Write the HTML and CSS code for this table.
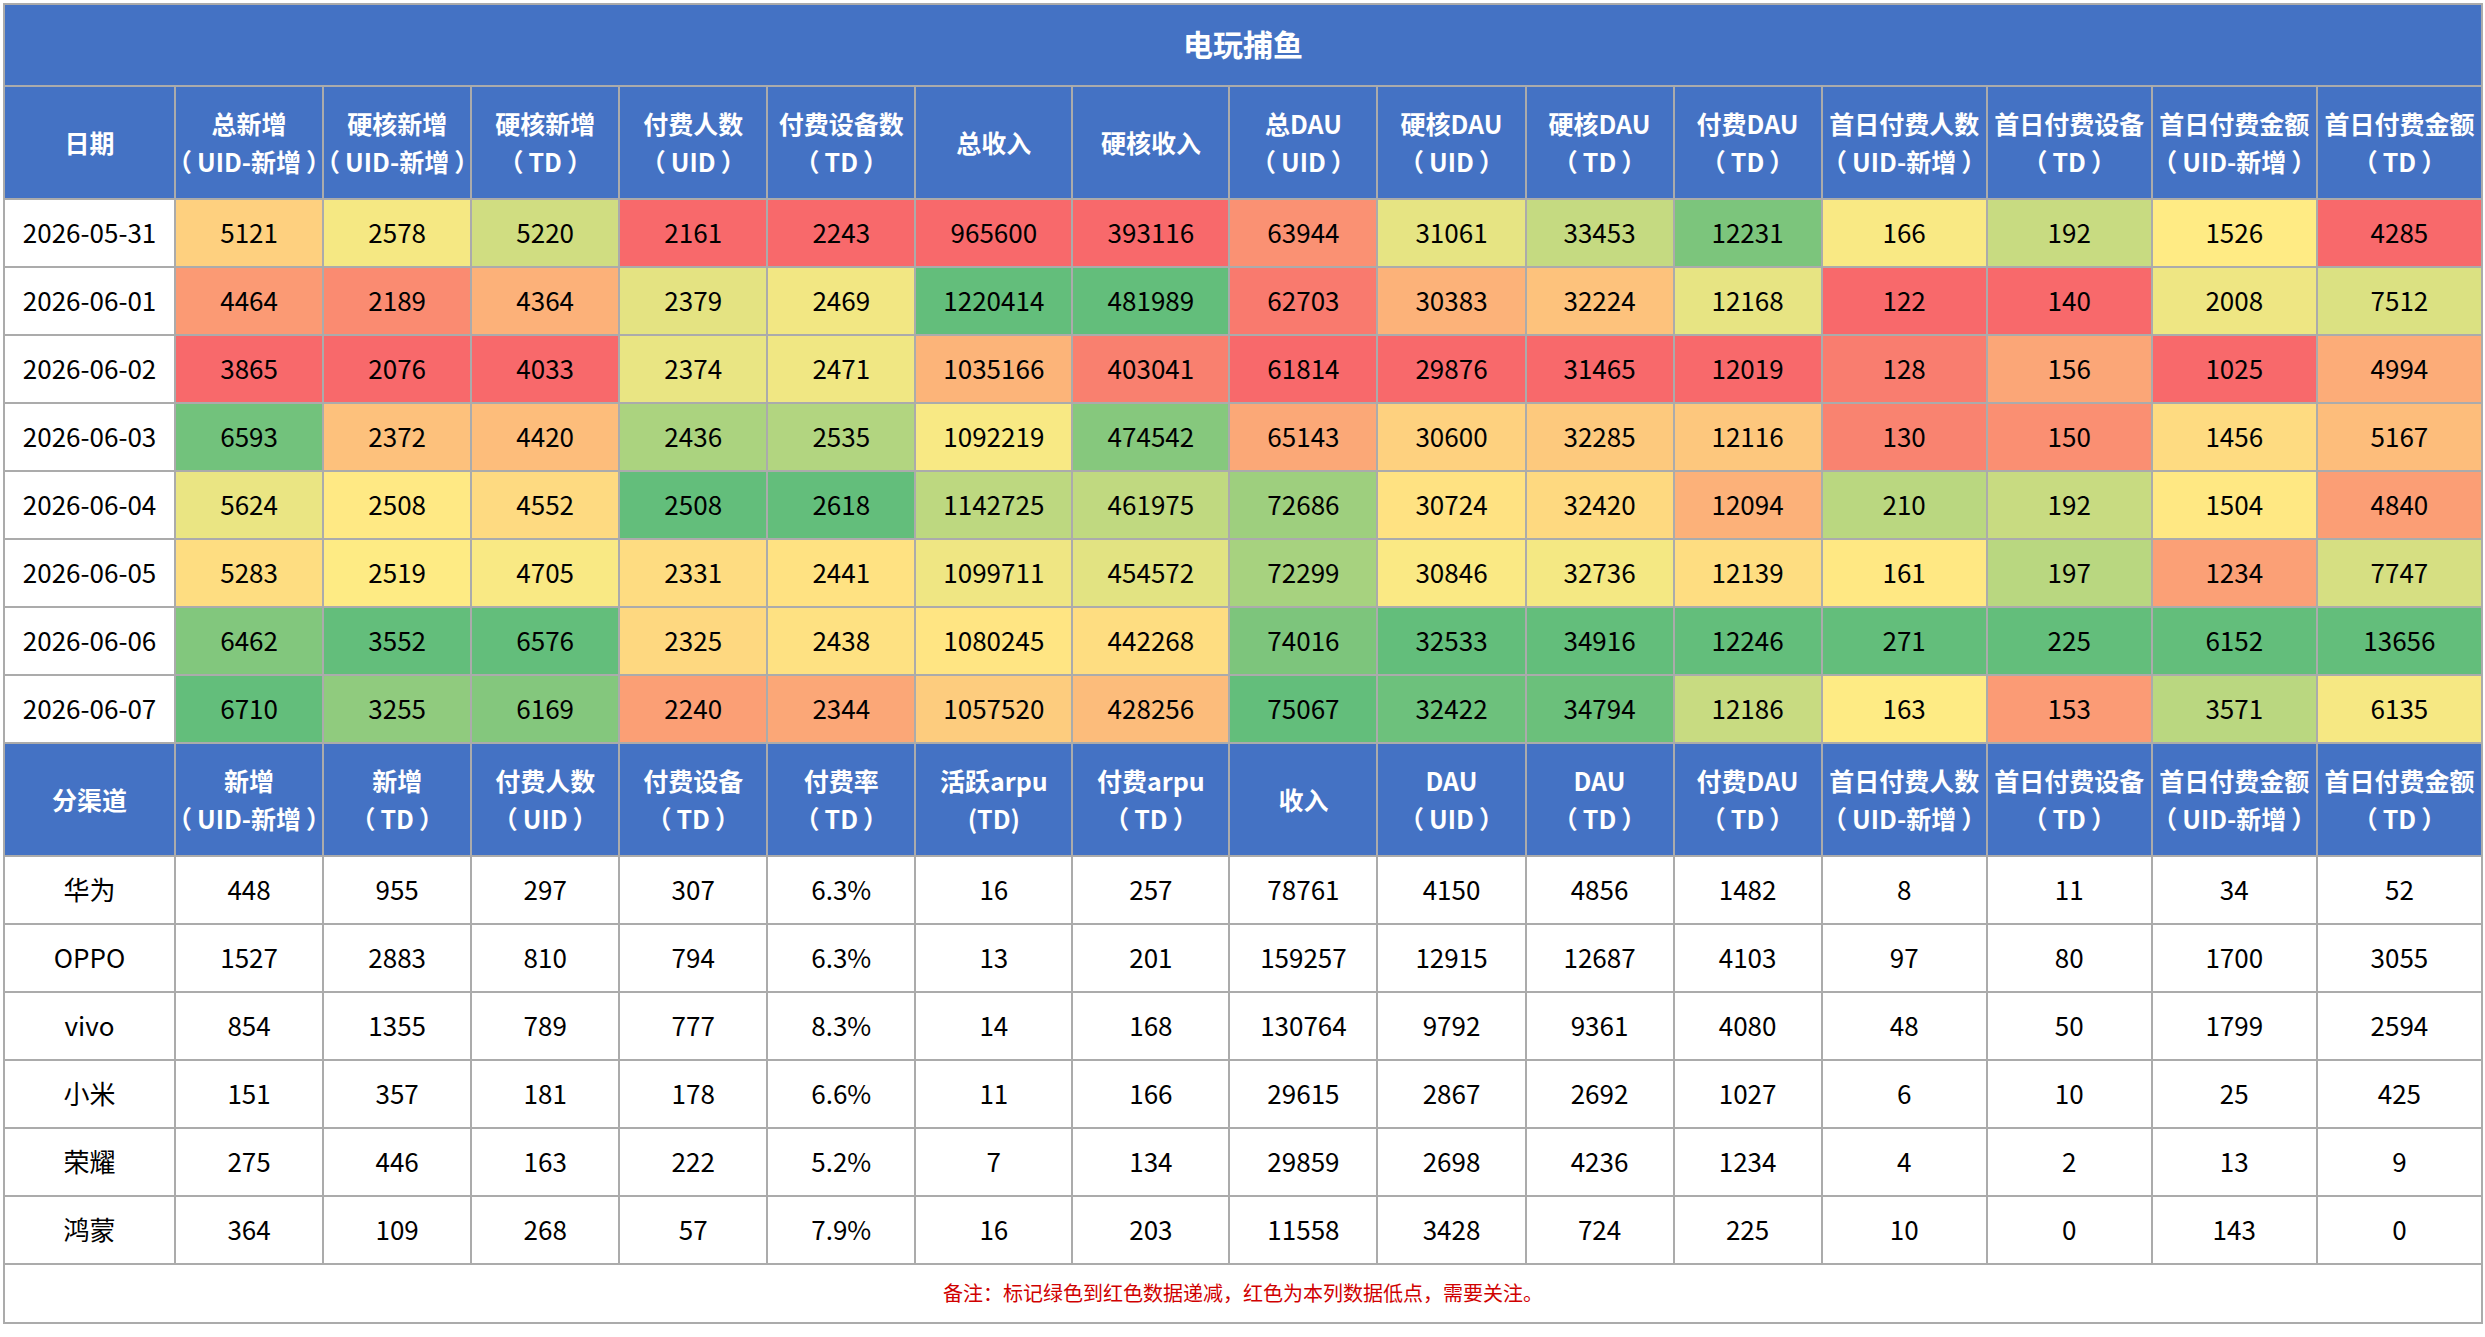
FILE: index.html
```html
<!DOCTYPE html>
<html lang="zh-CN">
<head>
<meta charset="utf-8">
<title>电玩捕鱼</title>
<link rel="stylesheet" href="styles.css">
</head>
<body>
<div class="sheet">
<table class="report">
<colgroup>
<col class="w-date">
<col class="w-std"><col class="w-std"><col class="w-std"><col class="w-std"><col class="w-std">
<col class="w-rev"><col class="w-rev">
<col class="w-std"><col class="w-std"><col class="w-std"><col class="w-std">
<col class="w-first"><col class="w-first"><col class="w-first"><col class="w-first">
</colgroup>
<thead>
<tr class="title-row"><th colspan="16">电玩捕鱼</th></tr>
<tr class="head-row">
<th>日期</th>
<th><span class="l1">总新增</span><span class="l2">（<span class="in">UID-新增</span>）</span></th>
<th><span class="l1">硬核新增</span><span class="l2">（<span class="in">UID-新增</span>）</span></th>
<th><span class="l1">硬核新增</span><span class="l2">（<span class="in">TD</span>）</span></th>
<th><span class="l1">付费人数</span><span class="l2">（<span class="in">UID</span>）</span></th>
<th><span class="l1">付费设备数</span><span class="l2">（<span class="in">TD</span>）</span></th>
<th>总收入</th>
<th>硬核收入</th>
<th><span class="l1">总DAU</span><span class="l2">（<span class="in">UID</span>）</span></th>
<th><span class="l1">硬核DAU</span><span class="l2">（<span class="in">UID</span>）</span></th>
<th><span class="l1">硬核DAU</span><span class="l2">（<span class="in">TD</span>）</span></th>
<th><span class="l1">付费DAU</span><span class="l2">（<span class="in">TD</span>）</span></th>
<th><span class="l1">首日付费人数</span><span class="l2">（<span class="in">UID-新增</span>）</span></th>
<th><span class="l1">首日付费设备</span><span class="l2">（<span class="in">TD</span>）</span></th>
<th><span class="l1">首日付费金额</span><span class="l2">（<span class="in">UID-新增</span>）</span></th>
<th><span class="l1">首日付费金额</span><span class="l2">（<span class="in">TD</span>）</span></th>
</tr>
</thead>
<tbody class="daily">
<tr><td class="date">2026-05-31</td><td>5121</td><td>2578</td><td>5220</td><td>2161</td><td>2243</td><td>965600</td><td>393116</td><td>63944</td><td>31061</td><td>33453</td><td>12231</td><td>166</td><td>192</td><td>1526</td><td>4285</td></tr>
<tr><td class="date">2026-06-01</td><td>4464</td><td>2189</td><td>4364</td><td>2379</td><td>2469</td><td>1220414</td><td>481989</td><td>62703</td><td>30383</td><td>32224</td><td>12168</td><td>122</td><td>140</td><td>2008</td><td>7512</td></tr>
<tr><td class="date">2026-06-02</td><td>3865</td><td>2076</td><td>4033</td><td>2374</td><td>2471</td><td>1035166</td><td>403041</td><td>61814</td><td>29876</td><td>31465</td><td>12019</td><td>128</td><td>156</td><td>1025</td><td>4994</td></tr>
<tr><td class="date">2026-06-03</td><td>6593</td><td>2372</td><td>4420</td><td>2436</td><td>2535</td><td>1092219</td><td>474542</td><td>65143</td><td>30600</td><td>32285</td><td>12116</td><td>130</td><td>150</td><td>1456</td><td>5167</td></tr>
<tr><td class="date">2026-06-04</td><td>5624</td><td>2508</td><td>4552</td><td>2508</td><td>2618</td><td>1142725</td><td>461975</td><td>72686</td><td>30724</td><td>32420</td><td>12094</td><td>210</td><td>192</td><td>1504</td><td>4840</td></tr>
<tr><td class="date">2026-06-05</td><td>5283</td><td>2519</td><td>4705</td><td>2331</td><td>2441</td><td>1099711</td><td>454572</td><td>72299</td><td>30846</td><td>32736</td><td>12139</td><td>161</td><td>197</td><td>1234</td><td>7747</td></tr>
<tr><td class="date">2026-06-06</td><td>6462</td><td>3552</td><td>6576</td><td>2325</td><td>2438</td><td>1080245</td><td>442268</td><td>74016</td><td>32533</td><td>34916</td><td>12246</td><td>271</td><td>225</td><td>6152</td><td>13656</td></tr>
<tr><td class="date">2026-06-07</td><td>6710</td><td>3255</td><td>6169</td><td>2240</td><td>2344</td><td>1057520</td><td>428256</td><td>75067</td><td>32422</td><td>34794</td><td>12186</td><td>163</td><td>153</td><td>3571</td><td>6135</td></tr>
</tbody>
<tbody class="channel-head">
<tr class="head-row">
<th>分渠道</th>
<th><span class="l1">新增</span><span class="l2">（<span class="in">UID-新增</span>）</span></th>
<th><span class="l1">新增</span><span class="l2">（<span class="in">TD</span>）</span></th>
<th><span class="l1">付费人数</span><span class="l2">（<span class="in">UID</span>）</span></th>
<th><span class="l1">付费设备</span><span class="l2">（<span class="in">TD</span>）</span></th>
<th><span class="l1">付费率</span><span class="l2">（<span class="in">TD</span>）</span></th>
<th><span class="l1">活跃arpu</span><span class="l2">(TD)</span></th>
<th><span class="l1">付费arpu</span><span class="l2">（<span class="in">TD</span>）</span></th>
<th>收入</th>
<th><span class="l1">DAU</span><span class="l2">（<span class="in">UID</span>）</span></th>
<th><span class="l1">DAU</span><span class="l2">（<span class="in">TD</span>）</span></th>
<th><span class="l1">付费DAU</span><span class="l2">（<span class="in">TD</span>）</span></th>
<th><span class="l1">首日付费人数</span><span class="l2">（<span class="in">UID-新增</span>）</span></th>
<th><span class="l1">首日付费设备</span><span class="l2">（<span class="in">TD</span>）</span></th>
<th><span class="l1">首日付费金额</span><span class="l2">（<span class="in">UID-新增</span>）</span></th>
<th><span class="l1">首日付费金额</span><span class="l2">（<span class="in">TD</span>）</span></th>
</tr>
</tbody>
<tbody class="channel">
<tr><td>华为</td><td>448</td><td>955</td><td>297</td><td>307</td><td>6.3%</td><td>16</td><td>257</td><td>78761</td><td>4150</td><td>4856</td><td>1482</td><td>8</td><td>11</td><td>34</td><td>52</td></tr>
<tr><td>OPPO</td><td>1527</td><td>2883</td><td>810</td><td>794</td><td>6.3%</td><td>13</td><td>201</td><td>159257</td><td>12915</td><td>12687</td><td>4103</td><td>97</td><td>80</td><td>1700</td><td>3055</td></tr>
<tr><td>vivo</td><td>854</td><td>1355</td><td>789</td><td>777</td><td>8.3%</td><td>14</td><td>168</td><td>130764</td><td>9792</td><td>9361</td><td>4080</td><td>48</td><td>50</td><td>1799</td><td>2594</td></tr>
<tr><td>小米</td><td>151</td><td>357</td><td>181</td><td>178</td><td>6.6%</td><td>11</td><td>166</td><td>29615</td><td>2867</td><td>2692</td><td>1027</td><td>6</td><td>10</td><td>25</td><td>425</td></tr>
<tr><td>荣耀</td><td>275</td><td>446</td><td>163</td><td>222</td><td>5.2%</td><td>7</td><td>134</td><td>29859</td><td>2698</td><td>4236</td><td>1234</td><td>4</td><td>2</td><td>13</td><td>9</td></tr>
<tr><td>鸿蒙</td><td>364</td><td>109</td><td>268</td><td>57</td><td>7.9%</td><td>16</td><td>203</td><td>11558</td><td>3428</td><td>724</td><td>225</td><td>10</td><td>0</td><td>143</td><td>0</td></tr>
</tbody>
<tfoot>
<tr class="note-row"><td colspan="16">备注：标记绿色到红色数据递减，红色为本列数据低点，需要关注。</td></tr>
</tfoot>
</table>
</div>
<script src="script.js"></script>
</body>
</html>
```
FILE: styles.css
```css
html, body {
  margin: 0;
  padding: 0;
  background: #ffffff;
}
.sheet {
  padding: 3px 0 0 3px;
}
.report {
  width: 2480px;
  table-layout: fixed;
  border-collapse: collapse;
  font-family: "Noto Sans CJK SC", "Noto Sans", sans-serif;
  color: #000;
}
.w-date { width: 171px; }
.w-std { width: 148px; }
.w-rev { width: 157px; }
.w-first { width: 165px; }

.report th,
.report td {
  border: 2px solid #ababab;
  padding: 0;
  text-align: center;
  vertical-align: middle;
  white-space: nowrap;
}
.title-row th {
  height: 76px;
  padding-bottom: 4px;
  background: #4472c4;
  color: #fff;
  font-size: 30px;
  font-weight: 700;
}
.head-row th {
  height: 109px;
  padding-bottom: 2px;
  background: #4472c4;
  color: #fff;
  font-size: 25px;
  font-weight: 700;
  line-height: 38px;
}
.l1, .l2 {
  display: block;
  margin: 0 -20px;
}
.l2 .in {
  margin: 0 5px;
}
.daily td,
.channel td {
  height: 63px;
  padding-bottom: 3px;
  font-size: 26px;
  line-height: 32px;
}
.daily td.date {
  background: #fff;
}
.note-row td {
  height: 55px;
  padding-bottom: 2px;
  font-size: 20px;
  color: #d00000;
}
```
FILE: script.js
```js
(function () {
  var red = [248, 105, 107], yellow = [255, 235, 132], green = [99, 190, 123];
  function lerp(a, b, t) {
    return a.map(function (v, i) { return Math.round(v + (b[i] - v) * t); });
  }
  function median(arr) {
    var s = arr.slice().sort(function (a, b) { return a - b; });
    var n = s.length, p = (n - 1) * 0.5, lo = Math.floor(p), hi = Math.ceil(p);
    return s[lo] + (s[hi] - s[lo]) * (p - lo);
  }
  var rows = document.querySelectorAll('.daily tr');
  var cols = rows[0].children.length;
  for (var c = 1; c < cols; c++) {
    var cells = [], vals = [];
    rows.forEach(function (r) {
      cells.push(r.children[c]);
      vals.push(parseFloat(r.children[c].textContent));
    });
    var min = Math.min.apply(null, vals), max = Math.max.apply(null, vals), mid = median(vals);
    cells.forEach(function (cell, i) {
      var v = vals[i], col;
      if (v <= mid) col = lerp(red, yellow, mid === min ? 1 : (v - min) / (mid - min));
      else col = lerp(yellow, green, max === mid ? 0 : (v - mid) / (max - mid));
      cell.style.backgroundColor = 'rgb(' + col.join(',') + ')';
    });
  }
})();
```
